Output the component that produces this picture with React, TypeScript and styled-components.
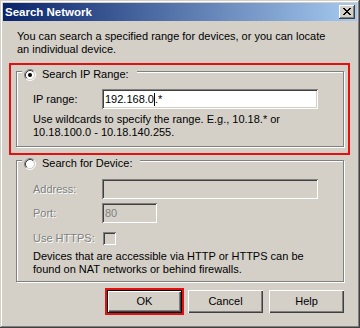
import React from 'react';
import styled, { createGlobalStyle } from 'styled-components';

const Global = createGlobalStyle`
  html, body { margin: 0; padding: 0; background: #D4D0C8; }
  body { font-family: "Liberation Sans", Arial, sans-serif; font-size: 11px; line-height: 13px; color: #000; }
`;

const Window = styled.div`
  width: 360px;
  height: 328px;
  box-sizing: border-box;
  padding: 3px;
  background: #D4D0C8;
  box-shadow: inset -1px -1px 0 #404040, inset 1px 1px 0 #D4D0C8, inset -2px -2px 0 #808080, inset 2px 2px 0 #FFFFFF;
  display: flex;
  flex-direction: column;
`;

const TitleBar = styled.div`
  height: 18px;
  display: flex;
  align-items: center;
  padding: 0 2px;
  background: linear-gradient(to right, #0A246A, #A6CAF0);
`;

const TitleText = styled.div`
  flex: 1;
  color: #fff;
  font-weight: bold;
  font-size: 11.5px;
  white-space: nowrap;
`;

const CaptionButton = styled.div`
  width: 16px;
  height: 14px;
  background: #D4D0C8;
  box-shadow: inset -1px -1px 0 #404040, inset 1px 1px 0 #FFFFFF, inset -2px -2px 0 #808080;
  display: flex;
  align-items: center;
  justify-content: center;
  padding: 0 1px 1px 0;
  box-sizing: border-box;
`;

const Body = styled.div`
  flex: 1;
  display: flex;
  flex-direction: column;
  padding: 9px 13px 0 13px;
`;

const Intro = styled.div`
  margin-left: 1px;
`;

const Highlight = styled.div`
  margin: 7px -6px 0 -7px;
  border: 2px solid #E41010;
  padding: 6px 4px 6px 5px;
`;

const GroupBox = styled.div<{ $pt: number; $pb: number }>`
  position: relative;
  border: 1px solid #808080;
  box-shadow: inset 1px 1px 0 #fff, 1px 1px 0 #fff;
  padding: ${(p) => p.$pt}px 0 ${(p) => p.$pb}px 16px;
`;

const Legend = styled.div`
  position: absolute;
  top: -4px;
  left: 5px;
  height: 13px;
  display: flex;
  align-items: center;
  gap: 6px;
  padding: 0 8px 0 2px;
  background: #D4D0C8;
  white-space: nowrap;
`;

const FieldRow = styled.div<{ $mt?: number }>`
  display: grid;
  grid-template-columns: 69px auto;
  align-items: center;
  margin-top: ${(p) => p.$mt ?? 0}px;
`;

const Label = styled.span<{ $disabled?: boolean }>`
  color: ${(p) => (p.$disabled ? '#808080' : '#000')};
  text-shadow: ${(p) => (p.$disabled ? '1px 1px 0 #fff' : 'none')};
  white-space: nowrap;
`;

const EditBox = styled.div<{ $w: number; $disabled?: boolean }>`
  width: ${(p) => p.$w}px;
  height: 20px;
  box-sizing: border-box;
  padding: 0 3px;
  display: flex;
  align-items: center;
  background: ${(p) => (p.$disabled ? '#D4D0C8' : '#fff')};
  color: ${(p) => (p.$disabled ? '#808080' : '#000')};
  box-shadow: inset 1px 1px 0 #808080, inset -1px -1px 0 #fff, inset 2px 2px 0 #404040, inset -2px -2px 0 #D4D0C8;
  white-space: nowrap;
`;

const Caret = styled.span`
  display: inline-block;
  width: 1px;
  height: 13px;
  background: #000;
`;

const Note = styled.div<{ $mt: number }>`
  margin-top: ${(p) => p.$mt}px;
`;

const CheckBox = styled.div<{ $disabled?: boolean }>`
  width: 13px;
  height: 13px;
  margin-left: 1px;
  background: ${(p) => (p.$disabled ? '#D4D0C8' : '#fff')};
  box-shadow: inset 1px 1px 0 #808080, inset -1px -1px 0 #fff, inset 2px 2px 0 #404040, inset -2px -2px 0 #D4D0C8;
`;

const CheckRow = styled(FieldRow)`
  height: 13px;
`;

const SecondGroup = styled.div`
  margin-top: 5px;
`;

const ButtonRow = styled.div`
  display: flex;
  justify-content: flex-end;
  gap: 6px;
  margin-top: 8px;
`;

const Button = styled.div<{ $default?: boolean; $marked?: boolean }>`
  width: 75px;
  height: 23px;
  box-sizing: border-box;
  display: flex;
  align-items: center;
  justify-content: center;
  background: #D4D0C8;
  border: ${(p) => (p.$default ? '1px solid #000' : 'none')};
  box-shadow: inset 1px 1px 0 #fff, inset -1px -1px 0 #404040, inset -2px -2px 0 #808080
    ${(p) => (p.$marked ? ', 0 0 0 2px #E41010' : '')};
`;

const Radio: React.FC<{ checked?: boolean }> = ({ checked }) => (
  <svg width="12" height="12" viewBox="0 0 12 12">
    <circle cx="6" cy="6" r="4.2" fill="#fff" />
    <path d="M2.11 9.89 A5.5 5.5 0 0 1 9.89 2.11" fill="none" stroke="#808080" strokeWidth="1" />
    <path d="M9.89 2.11 A5.5 5.5 0 0 1 2.11 9.89" fill="none" stroke="#fff" strokeWidth="1" />
    <path d="M2.82 9.18 A4.5 4.5 0 0 1 9.18 2.82" fill="none" stroke="#404040" strokeWidth="1" />
    <path d="M9.18 2.82 A4.5 4.5 0 0 1 2.82 9.18" fill="none" stroke="#D4D0C8" strokeWidth="1" />
    {checked && <circle cx="6" cy="6" r="2" fill="#000" />}
  </svg>
);

const CloseGlyph: React.FC = () => {
  const rows = ['XX....XX', '.XX..XX.', '..XXXX..', '...XX...', '..XXXX..', '.XX..XX.', 'XX....XX'];
  return (
    <svg width="8" height="7" viewBox="0 0 8 7" shapeRendering="crispEdges">
      {rows.flatMap((r, y) =>
        r.split('').map((c, x) => (c === 'X' ? <rect key={`${x}-${y}`} x={x} y={y} width="1" height="1" fill="#000" /> : null))
      )}
    </svg>
  );
};

export default function App() {
  return (
    <>
      <Global />
      <Window>
        <TitleBar>
          <TitleText>Search Network</TitleText>
          <CaptionButton>
            <CloseGlyph />
          </CaptionButton>
        </TitleBar>
        <Body>
          <Intro>
            You can search a specified range for devices, or you can locate
            <br />
            an individual device.
          </Intro>
          <Highlight>
            <GroupBox $pt={17} $pb={7}>
              <Legend>
                <Radio checked />
                <span>Search IP Range:</span>
              </Legend>
              <FieldRow>
                <Label>IP range:</Label>
                <EditBox $w={216}>
                  192.168.0<Caret />.*
                </EditBox>
              </FieldRow>
              <Note $mt={4}>
                Use wildcards to specify the range. E.g., 10.18.* or
                <br />
                10.18.100.0 - 10.18.140.255.
              </Note>
            </GroupBox>
          </Highlight>
          <SecondGroup>
            <GroupBox $pt={18} $pb={5}>
              <Legend>
                <Radio />
                <span>Search for Device:</span>
              </Legend>
              <FieldRow>
                <Label $disabled>Address:</Label>
                <EditBox $w={216} $disabled />
              </FieldRow>
              <FieldRow $mt={4}>
                <Label $disabled>Port:</Label>
                <EditBox $w={55} $disabled>80</EditBox>
              </FieldRow>
              <CheckRow $mt={9}>
                <Label $disabled>Use HTTPS:</Label>
                <CheckBox $disabled />
              </CheckRow>
              <Note $mt={5}>
                Devices that are accessible via HTTP or HTTPS can be
                <br />
                found on NAT networks or behind firewalls.
              </Note>
            </GroupBox>
          </SecondGroup>
          <ButtonRow>
            <Button $default $marked>OK</Button>
            <Button>Cancel</Button>
            <Button>Help</Button>
          </ButtonRow>
        </Body>
      </Window>
    </>
  );
}
